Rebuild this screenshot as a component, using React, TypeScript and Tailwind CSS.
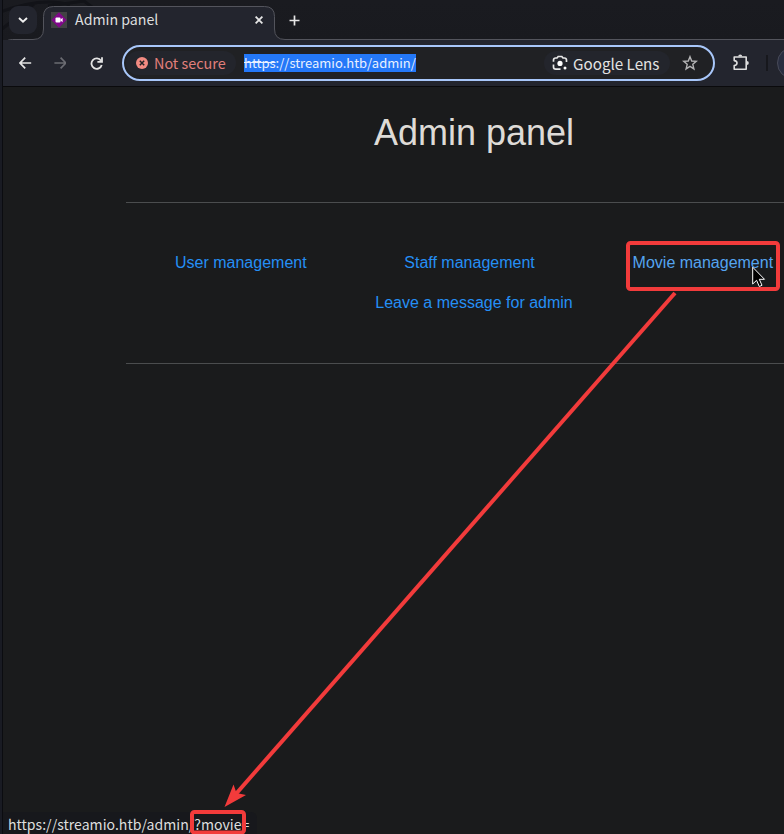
import type { ReactNode } from "react";

const UI_FONT = "font-['Noto_Sans_CJK_SC','Noto_Sans',sans-serif]";

function TabOutline() {
  return (
    <svg className="absolute left-0 top-0" width="784" height="50" fill="none">
      <path
        d="M3.5 50V48.5Q3.5 39.5 12.5 39.5H33Q43.5 39.5 43.5 29V16.5Q43.5 6.5 53.5 6.5H264.5Q274.5 6.5 274.5 16.5V29Q274.5 39.5 285 39.5H784V50Z"
        fill="#23252e"
      />
      <path
        d="M3.5 48.5Q3.5 39.5 12.5 39.5H33Q43.5 39.5 43.5 29V16.5Q43.5 6.5 53.5 6.5H264.5Q274.5 6.5 274.5 16.5V29Q274.5 39.5 285 39.5H784"
        stroke="#53545c"
      />
    </svg>
  );
}

function Wallpaper() {
  return (
    <svg className="absolute left-0 top-0" width="784" height="40" fill="none" stroke="#121318">
      <path d="M2 29L34 4M0 12C25 3 50 -1 70 5M48 6L84 1L92 7" strokeWidth="3" />
    </svg>
  );
}

function Favicon() {
  return (
    <svg width="16" height="16" viewBox="0 0 16 16">
      <rect width="16" height="16" fill="#424244" />
      <path d="M8 .3L15.7 8L8 15.7L.3 8Z" fill="#81078a" />
      <rect x="4.5" y="5.5" width="5" height="5" rx="1" fill="#fff" />
      <path d="M9 8L11.6 5.7V10.3Z" fill="#fff" />
    </svg>
  );
}

function TabStrip() {
  return (
    <div className="relative flex h-10 shrink-0 bg-linear-to-b from-[#1a1b20] to-[#191a1f]">
      <Wallpaper />
      <TabOutline />
      <div className="relative ml-[9px] mt-[6px] flex h-7 w-7 items-center justify-center rounded-[9px] bg-[#23252e]">
        <svg width="10" height="6" fill="none" stroke="#f0f0f0" strokeWidth="1.9">
          <path d="M1 1L5 4.7L9 1" />
        </svg>
      </div>
      <div className="relative ml-[14px] flex h-10 w-[212px] items-center">
        <Favicon />
        <span className="mb-[2px] ml-2 whitespace-nowrap text-[14.2px] leading-5 text-[#dedfdf]">Admin panel</span>
        <svg className="ml-auto" width="8" height="8" fill="none" stroke="#e6e6e6" strokeWidth="1.8">
          <path d="M.6 .6L7.4 7.4M7.4 .6L.6 7.4" />
        </svg>
      </div>
      <svg className="relative ml-[26px] mt-[15px]" width="11" height="11" stroke="#e6e6e6" strokeWidth="1.7">
        <path d="M5.5 .5V10.5M.5 5.5H10.5" />
      </svg>
    </div>
  );
}

function LensIcon() {
  return (
    <svg width="16" height="16" viewBox="0 0 16 16" fill="none" stroke="#e8e8e8" strokeWidth="1.7">
      <path d="M1.5 6.8V5.2Q1.5 3 3.7 3H5L6.2 1.5H9.8L11 3H12.3Q14.5 3 14.5 5.2V7M1.5 9.6V12Q1.5 14.2 3.7 14.2H8.5" />
      <circle cx="8" cy="8.4" r="2.6" fill="#fff" stroke="none" />
      <circle cx="13" cy="13" r="1.5" fill="#fff" stroke="none" />
    </svg>
  );
}

function Toolbar() {
  return (
    <div className="relative flex h-[46px] shrink-0 items-center bg-[#23252e]">
      <svg className="ml-[19px]" width="13" height="12" fill="none" stroke="#e4e4e4" strokeWidth="1.7">
        <path d="M12.2 6H1.4M6.2 .7L1 6L6.2 11.3" />
      </svg>
      <svg className="ml-[22px]" width="13" height="12" fill="none" stroke="#6b6c72" strokeWidth="1.7">
        <path d="M.4 6H11.6M6.6 .7L11.8 6L6.6 11.3" />
      </svg>
      <svg className="ml-[24px]" width="13" height="13" fill="none" stroke="#e4e4e4" strokeWidth="1.8">
        <path d="M11 3.7A5.2 5.2 0 1 0 11.7 7.9M12 .3V4.9H7.4" />
      </svg>
      <div className="ml-[19px] flex h-9 w-[593px] shrink-0 items-center rounded-full border-2 border-[#a8c7fa] bg-[#202124]">
        <div className="ml-[2px] flex h-6 w-[110px] items-center rounded-full bg-[#23252c] pl-[10px]">
          <svg width="12" height="12" fill="none">
            <circle cx="6" cy="6" r="6" fill="#f28b82" />
            <path d="M3.8 3.8L8.2 8.2M8.2 3.8L3.8 8.2" stroke="#202124" strokeWidth="1.5" />
          </svg>
          <span className="mb-px ml-[6px] whitespace-nowrap text-[14.4px] leading-5 text-[#e17f7b]">Not secure</span>
        </div>
        <span className="ml-[8px] h-[18px] whitespace-nowrap bg-[#2478f8] text-[13px] leading-[18px] text-[#e8f0ff]">
          <span className="line-through">https</span>://streamio.htb/admin/
        </span>
        <div className="ml-auto mr-[12px] flex h-6 w-[126px] items-center rounded-full bg-[#23252c] pl-2">
          <LensIcon />
          <span className="ml-[5px] whitespace-nowrap text-[15.2px] leading-5 text-[#e3e3e3]">Google Lens</span>
        </div>
        <svg className="mr-[15px]" width="16" height="16" viewBox="0 0 16 16" fill="none" stroke="#b4b4b5" strokeWidth="1.4">
          <path d="M8 1.7L9.7 6L14.3 6.3L10.8 9.3L11.9 13.9L8 11.4L4.1 13.9L5.2 9.3L1.7 6.3L6.3 6Z" />
        </svg>
      </div>
      <svg className="mb-[2px] ml-[18px] shrink-0" width="17" height="17" fill="none" stroke="#dedede" strokeWidth="1.6">
        <path d="M1.2 3H13.2V15.2H1.2V11.6Q4 11.4 4 9.1Q4 6.8 1.2 6.6Z" strokeLinejoin="round" />
        <path d="M5.2 2.6A2 2 0 0 1 9.2 2.6ZM13.8 7.1A2 2 0 0 1 13.8 11.1Z" fill="#dedede" stroke="none" />
      </svg>
      <div className="ml-[16px] h-4 w-[2px] shrink-0 bg-[#17181d]" />
      <div className="ml-[9px] h-8 w-[7px] shrink-0 overflow-hidden">
        <div className="h-8 w-8 rounded-full border border-[#484b59] bg-[#292e40]" />
      </div>
    </div>
  );
}

function NavLink({ className, children }: { className: string; children: ReactNode }) {
  return (
    <a href="#" className={`whitespace-nowrap ${className}`}>
      {children}
    </a>
  );
}

function Annotations() {
  return (
    <svg className="pointer-events-none absolute inset-0" width="784" height="834" fill="none">
      <rect x="628" y="243" width="150" height="46" rx="2.5" stroke="#f23b3b" strokeWidth="4" />
      <rect x="192" y="812" width="52" height="20.5" rx="2.5" stroke="#f23b3b" strokeWidth="4" />
      <path d="M675 293L235 795" stroke="#f23b3b" strokeWidth="4" />
      <path d="M224.5 807L233.5 784.5L236.5 793L246 795Z" fill="#f23b3b" />
      <path
        d="M752.7 267.2V284L756.6 280.3L759.3 286.5L762 285.3L759.3 279.3H764.5Z"
        fill="#000"
        stroke="#fff"
        strokeWidth="1"
      />
    </svg>
  );
}

export default function App() {
  return (
    <div className={`relative flex h-[834px] w-[784px] flex-col overflow-hidden bg-[#1a1b1c] ${UI_FONT}`}>
      <TabStrip />
      <Toolbar />
      <main className="flex grow flex-col border-t border-[#0a0a0c] pl-[126px] font-['Liberation_Sans',Arial,sans-serif]">
        <h1 className="mt-[24px] w-[696px] text-center text-[36px] leading-[43px] text-[#dedbd7]">Admin panel</h1>
        <hr className="mt-[48px] border-[#4b4d4e]" />
        <nav className="h-[160px] w-[696px] pt-[48px] text-base text-[#258ff5]">
          <div className="flex h-10">
            <NavLink className="ml-[49px] w-[229.3px]">User management</NavLink>
            <NavLink className="w-[228.3px]">Staff management</NavLink>
            <NavLink className="text-[#54a4f0]">Movie management</NavLink>
          </div>
          <div className="flex pl-[249.3px]">
            <NavLink className="">Leave a message for admin</NavLink>
          </div>
        </nav>
        <hr className="border-[#4b4d4e]" />
      </main>
      <div className="flex h-[22px] w-[257px] shrink-0 items-center rounded-tr-md bg-[#17181c] pl-2 pt-[2px]">
        <span className="whitespace-nowrap text-[14.1px] leading-5 text-[#dedede]">https://streamio.htb/admin/?movie=</span>
      </div>
      <div className="absolute inset-y-0 left-0 w-[3px] border-r border-[#0b0c10] bg-[#191b23]" />
      <Annotations />
    </div>
  );
}
